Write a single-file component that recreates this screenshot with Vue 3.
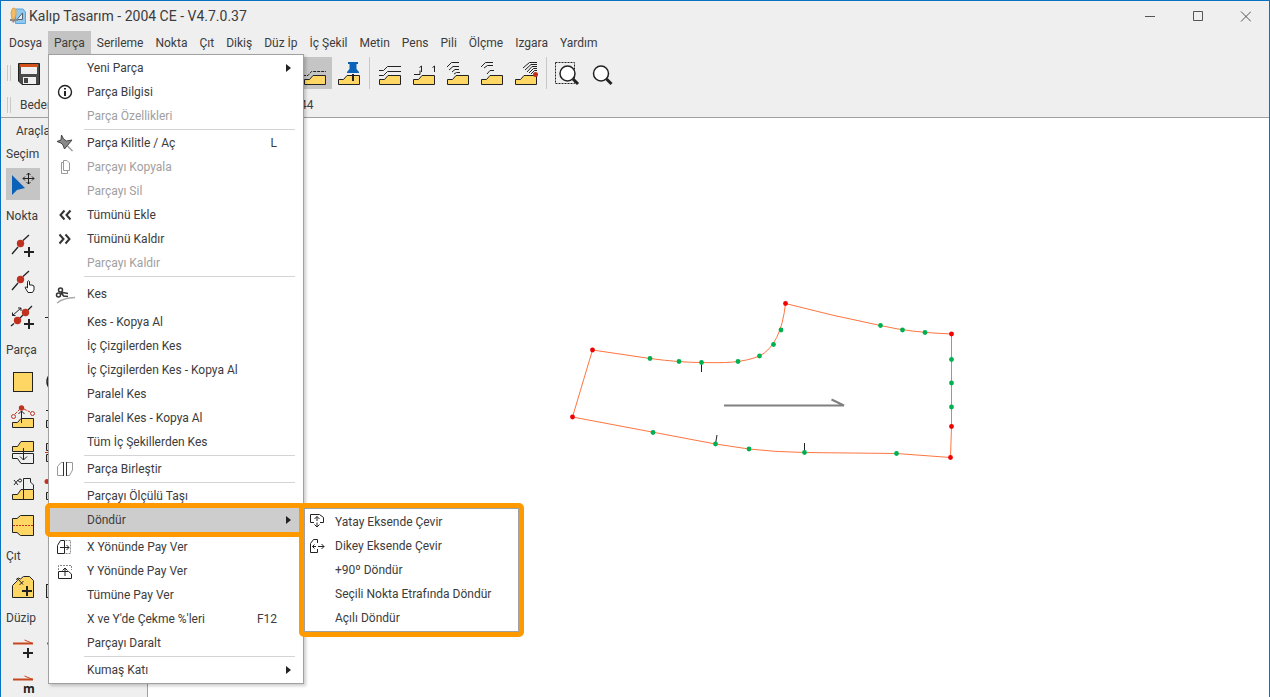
<script setup>
const menus = ['Dosya', 'Parça', 'Serileme', 'Nokta', 'Çıt', 'Dikiş', 'Düz İp', 'İç Şekil', 'Metin', 'Pens', 'Pili', 'Ölçme', 'Izgara', 'Yardım']

const block = '<path d="M6.5 27.5V22.5H11.5L15 18.5H27.5V27.5Z" fill="#fdd663" stroke="#222"/>'
const plus = (x, y) => `<path d="M${x - 5} ${y}H${x + 5}M${x} ${y - 5}V${y + 5}" stroke="#222" stroke-width="2"/>`

const icons = {
  save: '<path d="M6.5 6.5H27.5V27.5H10L6.5 24Z" fill="#4a4a4a" stroke="#222"/><path d="M8 7H26V10H8Z" fill="#d2521c"/><path d="M9 10H25V17H9Z" fill="#efefef"/><path d="M11 20H24V27H11Z" fill="#efefef"/><path d="M12 21H16V26H12Z" fill="#444"/>',
  grade: block + '<path d="M5 18.5H10L13.5 14.5H28" stroke="#222" stroke-dasharray="3 1"/>',
  pin: block + '<path d="M16 5H26V7H24.500V12L27 15V16H15V15L17.500 12V7H16Z" fill="#0a62b8"/><path d="M21 17V24" stroke="#222" stroke-width="2"/>',
  lines: block + '<path d="M6 13.500H10.500L14.500 9.500H28M6 18.500H10.500L14.500 14.500H28" stroke="#222"/>',
  ones: block + '<path d="M7 17.500H13V13.500M12.500 10.500L14.500 9V15M25.500 10.500L27.500 9V15" stroke="#222"/>',
  nestA: block + '<path d="M6 10L10.500 5.500H18M8 13L12 9.500H18M11 15L14 12.500H18M13 17L15.500 15.500H19" stroke="#222"/>',
  nestB: block + '<path d="M6 10L10.500 5.500H18M9 11L12.500 8.500H18M12 17L15 13.500H19" stroke="#222"/>',
  nestC: block + '<path d="M14 11L20.500 5.500H28M16 13L22 7.500H28M18 15L23 9.500H28M20 16L24.500 11.500H28M22 17L25.500 13.500H28" stroke="#222"/><circle cx="26.500" cy="17.500" r="2.500" fill="#c22f1c"/>',
  zoomArea: '<rect x="5.500" y="5.500" width="19" height="21" stroke="#222" stroke-dasharray="2 1"/><circle cx="17.500" cy="16.500" r="7.500" fill="#fff" stroke="#222" stroke-width="1.500"/><path d="M23 22L28 27" stroke="#222" stroke-width="3"/>',
  zoom: '<circle cx="17" cy="16.500" r="7.500" fill="#fff" stroke="#222" stroke-width="1.500"/><path d="M22.500 22L27.500 27" stroke="#222" stroke-width="3"/>',
  select: '<path d="M6 7V27L11 22L19 20Z" fill="#0a62b8"/><path d="M17 10.500H28M22.500 5V16M19 8.500L17 10.500L19 12.500M26 8.500L28 10.500L26 12.500M20.500 7L22.500 5L24.500 7M20.500 14L22.500 16L24.500 14" stroke="#222"/>',
  pointAdd: '<path d="M6 24L12 17M17 10.500L23 5" stroke="#222" stroke-width="1.300"/><circle cx="14.500" cy="13.500" r="3.700" fill="#c03220"/>' + plus(23, 22),
  pointMove: '<path d="M6 24L12 17M17 10.500L23 5" stroke="#222" stroke-width="1.300"/><circle cx="14.500" cy="13.500" r="3.700" fill="#c03220"/><path d="M21.500 22V15.500Q22.500 14 23.500 15.500V19H26L28 20V24L26.500 26.500H22L19 21.500Q20 20 21.500 22Z" fill="#fff" stroke="#222"/>',
  pointPair: '<path d="M5 24L8 21.500M14 16L17 13M22 8L26 4" stroke="#222" stroke-width="1.300"/><path d="M6.500 13.500L15 6M6.500 10.500V13.500H9.500M12 6H15V9" stroke="#222"/><circle cx="19.500" cy="10.500" r="3.700" fill="#c03220"/><circle cx="11.500" cy="18.500" r="3.700" fill="#c03220"/>' + plus(23, 22),
  dash: '<path d="M5 15.500H20" stroke="#222"/>',
  square: '<rect x="7.500" y="8.500" width="19" height="19" fill="#fdd663" stroke="#222"/>',
  circle: '<circle cx="17" cy="17.500" r="10" fill="#fdd663" stroke="#222" stroke-width="1.500"/>',
  pull: block + '<path d="M9 14L13 10M18 9L24 12" stroke="#c03220" stroke-dasharray="3 1"/><circle cx="15.500" cy="8" r="2.700" fill="#c03220"/><circle cx="7.500" cy="16.500" r="2" stroke="#c03220"/><circle cx="26.500" cy="13.500" r="2" stroke="#c03220"/><path d="M15.500 23V11M12.500 14L15.500 11L18.500 14" stroke="#222"/>',
  pullB: '<path d="M6.500 27.500V20.500H27.500V27.500Z" fill="#fdd663" stroke="#222"/><path d="M6 10.500H20" stroke="#222"/>',
  mirror: '<path d="M6.500 15.500V10.500H11.500L15 5.500H27.500V15.500Z" fill="#fdd663" stroke="#222"/><path d="M6.500 17.500V22.500H11.500L15 27.500H27.500V17.500Z" stroke="#222"/><path d="M17.500 12V24M14 20.500L17.500 24L21 20.500" stroke="#222"/>',
  mirrorB: '<path d="M6.500 14.500V7.500H27.500V14.500ZM6.500 18.500V25.500H27.500V18.500Z" fill="#fdd663" stroke="#222"/><path d="M5 16.500H28" stroke="#c03220"/>',
  measure: '<path d="M6.500 27.500V22.500H11.500L15 17.500H27.500V27.500Z" fill="#fdd663" stroke="#222"/><path d="M17.500 27V6.500H24.500V10L27.500 13V17" stroke="#222"/><path d="M8 8L12 13M12 8L8 13" stroke="#222"/><circle cx="14" cy="8.500" r="1.500" stroke="#222"/>',
  measureB: '<path d="M6.500 27.500V20.500H27.500V27.500Z" fill="#fdd663" stroke="#222"/><circle cx="7" cy="9.500" r="2.500" fill="#c03220"/>',
  fold: '<path d="M6.500 10.500H11L14.500 7.500H27.500V27.500H14.500L11 24.500H6.500Z" fill="#fdd663" stroke="#222"/><path d="M7 17.500H27" stroke="#c03220" stroke-dasharray="2 1"/>',
  notch: '<path d="M6.500 27.500V15.500L11.500 10.500L10.500 9L12.500 8L14.500 9L17.500 6.500H23.500L27.500 10.500V27.500Z" fill="#fdd663" stroke="#222"/><path d="M12 9L17 14.500M13.500 15L17.500 11" stroke="#222"/>' + plus(21, 21),
  notchB: '<rect x="6.500" y="14.500" width="21" height="13" fill="#fdd663" stroke="#222"/>',
  grainAdd: '<path d="M7 11.500H27" stroke="#c8461e" stroke-width="2"/><path d="M27 11.500L18.500 8" stroke="#c8461e"/>' + plus(22, 21),
  grainM: '<path d="M7 11.500H27" stroke="#c8461e" stroke-width="2"/><path d="M27 11.500L18.500 8" stroke="#c8461e"/><text x="17" y="25" font-size="12" font-weight="bold" font-family="Open Sans" fill="#222">m</text>',
  grainB: '<path d="M7 11.500H27" stroke="#c8461e" stroke-width="2"/>',
  info: '<circle cx="12" cy="12" r="6.500" stroke="#222" stroke-width="1.400"/><path d="M12 8V9.500M12 11V16" stroke="#222" stroke-width="2"/>',
  tack: '<path d="M8.500 4L10.500 8L13.500 10L19 9L11.500 18L10 14L8 12L4 10.500L8 9Z" fill="#888" stroke="#444"/><path d="M14.500 15L19.500 20" stroke="#999" stroke-width="1.400"/>',
  copy: '<path d="M10.500 5.500H14L16.500 8V15.500H10.500ZM10 7.500H8.500V18.500H14.500V16" stroke="#999"/>',
  prev: '<path d="M11.500 7.500L7.500 12L11.500 16.500M17.500 7.500L13.500 12L17.500 16.500" stroke="#333" stroke-width="2"/>',
  next: '<path d="M6.500 7.500L10.500 12L6.500 16.500M12.500 7.500L16.500 12L12.500 16.500" stroke="#333" stroke-width="2"/>',
  cut: '<circle cx="7.500" cy="8" r="2" stroke="#333" stroke-width="1.500"/><circle cx="5.500" cy="13" r="2" stroke="#333" stroke-width="1.500"/><path d="M8 10L10.500 14L15 14.500M7.500 12.500L10 10.500L15 11.500" stroke="#333" stroke-width="1.500"/><path d="M4 21Q10 16 22 15.500" stroke="#aaa" stroke-width="1.300"/>',
  join: '<path d="M10 5.500H8L4.500 9.500V18.500H10M14 5.500H19.500V13L16.500 18.500H14" stroke="#999"/><path d="M10.500 5V19M13.500 5V19" stroke="#333"/>',
  growX: '<path d="M12.500 5.500H17.500V18.500H12.500" stroke="#888" stroke-dasharray="2 1"/><path d="M11.500 18.500H4.500V10.500L7.500 5.500H11.500ZM7 12.500H16M13.500 10L16 12.500L13.500 15" stroke="#222"/>',
  growY: '<path d="M5.500 11V6.500H18.500V11" stroke="#888" stroke-dasharray="2 1"/><path d="M5.500 12.500V19.500H18.500V15L15.500 12.500H5.500M12 17V9M9.500 11.500L12 9L14.500 11.500" stroke="#222"/>',
  flipH: '<path d="M8 12.500H4.500V4.500H13.500L17.500 7.500V12.500H14" stroke="#222"/><path d="M11 11V6.500M8.500 9L11 6.500L13.500 9M11 12.500V17M8.500 14.500L11 17L13.500 14.500" stroke="#222"/>',
  flipV: '<path d="M11.500 9V5.500H7.500L4.500 9.500V18.500H11.500V15" stroke="#222"/><path d="M10 12.500H6.500M8.500 10.500L6.500 12.500L8.500 14.500M12 12.500H18M15.500 10L18 12.500L15.500 15" stroke="#222"/>'
}

const toolGroups = [['grade', 'pin'], ['lines', 'ones', 'nestA', 'nestB', 'nestC'], ['zoomArea', 'zoom']]

const sections = [
  { name: 'Seçim', tools: ['select'] },
  { name: 'Nokta', tools: ['pointAdd', '', 'pointMove', '', 'pointPair', 'dash'] },
  { name: 'Parça', tools: ['square', 'circle', 'pull', 'pullB', 'mirror', 'mirrorB', 'measure', 'measureB', 'fold', ''] },
  { name: 'Çıt', tools: ['notch', 'notchB'] },
  { name: 'Düzip', tools: ['grainAdd', 'grainB', 'grainM', ''] }
]

const menuItems = [
  { t: 'Yeni Parça', sub: true }, { t: 'Parça Bilgisi', i: 'info' }, { t: 'Parça Özellikleri', off: true }, { sep: true },
  { t: 'Parça Kilitle / Aç', i: 'tack', key: 'L' }, { t: 'Parçayı Kopyala', i: 'copy', off: true }, { t: 'Parçayı Sil', off: true },
  { t: 'Tümünü Ekle', i: 'prev' }, { t: 'Tümünü Kaldır', i: 'next' }, { t: 'Parçayı Kaldır', off: true }, { sep: true },
  { t: 'Kes', i: 'cut', tall: true }, { t: 'Kes - Kopya Al' }, { t: 'İç Çizgilerden Kes' }, { t: 'İç Çizgilerden Kes - Kopya Al' },
  { t: 'Paralel Kes' }, { t: 'Paralel Kes - Kopya Al' }, { t: 'Tüm İç Şekillerden Kes' }, { sep: true },
  { t: 'Parça Birleştir', i: 'join' }, { sep: true },
  { t: 'Parçayı Ölçülü Taşı' }, { t: 'Döndür', sub: true, on: true }, { sep: true },
  { t: 'X Yönünde Pay Ver', i: 'growX' }, { t: 'Y Yönünde Pay Ver', i: 'growY' }, { t: 'Tümüne Pay Ver' },
  { t: "X ve Y'de Çekme %'leri", key: 'F12' }, { t: 'Parçayı Daralt' }, { sep: true }, { t: 'Kumaş Katı', sub: true }
]

const subItems = [
  { t: 'Yatay Eksende Çevir', i: 'flipH' }, { t: 'Dikey Eksende Çevir', i: 'flipV' }, { t: '+90º Döndür' },
  { t: 'Seçili Nokta Etrafında Döndür' }, { t: 'Açılı Döndür' }
]

const corners = [[32.5, 60], [225.5, 13.5], [391.500, 44], [391.500, 136.500], [390.500, 167.500], [12.500, 127]]
const points = [[90, 68.500], [119, 71.500], [141.500, 72.500], [178, 71.500], [199.500, 66], [213.500, 54.500], [221, 40], [320.500, 35.500], [342.500, 40], [365, 42.500], [391.500, 69.500], [391.500, 93], [391.500, 117], [93, 142.500], [155.500, 154], [189, 159], [244.500, 162.500], [336.500, 163.500]]
</script>

<template>
  <div class="window">
    <header class="titlebar">
      <svg class="logo" viewBox="0 0 18 18" fill="none">
        <path d="M6.500 2H14L16.500 5V16.500H6.500Z" fill="#8cc8f0" stroke="#5aa5dc" />
        <path d="M8 12.500L13.500 6V12.500Z" fill="#e6eef5" stroke="#56636f" />
        <path d="M1 12H9V14H6L4 16L3 14H1Z" fill="#888" />
        <path d="M3.500 1.500Q6 0 7 3V8L5 12H3L2 6Z" fill="#f3bd68" stroke="#dda04b" />
      </svg>
      <h1>Kalıp Tasarım - 2004 CE - V4.7.0.37</h1>
      <div class="controls">
        <button aria-label="Simge durumuna küçült"><svg viewBox="0 0 11 11"><path d="M1 5.500H11" /></svg></button>
        <button aria-label="Ekranı kapla"><svg viewBox="0 0 11 11"><path d="M1.500 .5H10.500V9.500H1.500Z" /></svg></button>
        <button aria-label="Kapat"><svg viewBox="0 0 11 11"><path d="M1 .5L11 10.500M11 .5L1 10.500" /></svg></button>
      </div>
    </header>

    <nav class="menubar">
      <button v-for="m in menus" :key="m" :class="{ open: m === 'Parça' }">{{ m }}</button>
    </nav>

    <div class="toolbar">
      <span class="grip"></span>
      <button class="tool save" aria-label="Kaydet"><svg viewBox="0 0 34 32" v-html="icons.save"></svg></button>
      <div v-for="(g, n) in toolGroups" :key="n" class="group">
        <button v-for="k in g" :key="k" class="tool" :class="{ on: k === 'grade' }" :aria-label="k"><svg viewBox="0 0 34 32" v-html="icons[k]"></svg></button>
      </div>
    </div>
    <div class="sizes">
      <span class="grip"></span>
      <span class="beden">Beden</span>
      <span class="size">44</span>
    </div>

    <div class="body">
      <aside class="sidebar">
        <h2>Araçlar</h2>
        <section v-for="s in sections" :key="s.name">
          <h3>{{ s.name }}</h3>
          <div class="grid">
            <template v-for="(k, n) in s.tools" :key="n">
              <button v-if="k" class="tool" :class="{ on: k === 'select' }" :aria-label="k"><svg viewBox="0 0 34 32" v-html="icons[k]"></svg></button>
              <span v-else></span>
            </template>
          </div>
        </section>
      </aside>
      <main class="canvas">
        <svg class="pattern" viewBox="0 0 410 180" fill="none">
          <path d="M32.500 60L90 68.500Q120 72.500 141.500 72.500C165 73 182 73 199.500 66Q221 55 225.500 13.500Q273 26 320.500 35.500Q350 42.500 391.500 44V136.500L390.500 167.500L336.500 163.500L244.500 162.500Q215 162 189 159L155.500 154L12.500 127Z" stroke="#ff7540" />
          <path d="M141.500 73V82M155.500 154L157 145M244.500 162V153" stroke="#222" />
          <path d="M164 115.500H284L271.500 109.500" stroke="#808080" stroke-width="2" />
          <circle v-for="(p, n) in points" :key="'g' + n" :cx="p[0]" :cy="p[1]" r="2.400" fill="#00b050" />
          <circle v-for="(p, n) in corners" :key="'r' + n" :cx="p[0]" :cy="p[1]" r="2.400" fill="#f00000" />
        </svg>
      </main>
    </div>

    <div class="popup main-menu" role="menu">
      <template v-for="(m, n) in menuItems" :key="n">
        <hr v-if="m.sep">
        <button v-else role="menuitem" :disabled="m.off" :class="{ tall: m.tall, on: m.on }">
          <svg viewBox="0 0 24 24" fill="none" v-html="m.i ? icons[m.i] : ''"></svg>
          <span class="label">{{ m.t }}</span>
          <kbd v-if="m.key">{{ m.key }}</kbd>
          <i v-if="m.sub" class="arrow"></i>
        </button>
      </template>
    </div>
    <div class="mark"></div>
    <div class="submark">
      <div class="popup sub-menu" role="menu">
        <button v-for="m in subItems" :key="m.t" role="menuitem">
          <svg viewBox="0 0 24 24" fill="none" v-html="m.i ? icons[m.i] : ''"></svg>
          <span class="label">{{ m.t }}</span>
        </button>
      </div>
    </div>
  </div>
</template>

<style>
body { margin: 0; overflow: hidden; }
</style>

<style scoped>
* { box-sizing: border-box; }
.window {
  position: relative; display: flex; flex-direction: column; height: 100vh; overflow: hidden;
  background: #efefef; border: 1px solid #0a70c0; border-bottom: 0; color: #3c3c3c;
  font: 12px/16px Roboto, "Noto Sans", sans-serif;
}
button { border: 0; padding: 0; margin: 0; background: none; font: inherit; color: inherit; display: block; }
svg { display: block; fill: none; }
h1, h2, h3 { margin: 0; font-weight: normal; font-size: 12px; }
.titlebar { display: flex; align-items: center; height: 30px; flex: none; padding-left: 8px; }
.logo { width: 18px; height: 18px; }
h1 { font-size: 14px; padding-left: 2px; flex: 1; }
.controls { display: flex; }
.controls button { width: 48px; height: 30px; display: flex; align-items: center; justify-content: center; }
.controls svg { width: 11px; height: 11px; stroke: #555; }
.menubar { display: flex; height: 23px; flex: none; padding-left: 2px; }
.menubar button { padding: 0 6px; font-size: 12px; height: 23px; }
.menubar .open { background: #c3c3c3; }
.toolbar { display: flex; align-items: center; height: 38px; flex: none; }
.grip { width: 4px; height: 16px; margin: 0 1px 0 6px; border: solid #c8c8c8; border-width: 0 1px; flex: none; }
.tool { width: 34px; height: 32px; flex: none; }
.tool svg { width: 34px; height: 32px; }
.on { background: #c5c5c5; }
.save { margin-right: 252px; }
.group { display: flex; }
.group + .group { border-left: 1px solid #c8c8c8; margin-left: 3px; padding-left: 3px; }
.sizes { display: flex; align-items: center; height: 26px; flex: none; border-bottom: 1px solid #a0a0a0; }
.beden { width: 288px; padding-left: 8px; }
.body { display: flex; flex: 1; min-height: 0; }
.sidebar { width: 147px; flex: none; border-right: 1px solid #a0a0a0; padding-left: 5px; }
h2 { height: 24px; line-height: 26px; padding-left: 10px; }
h3 { line-height: 24px; margin-bottom: 2px; }
.grid { display: grid; grid-template-columns: 34px 34px; grid-auto-rows: 32px; row-gap: 4px; padding-bottom: 4px; }
.canvas { flex: 1; background: #fff; position: relative; }
.pattern { position: absolute; left: 412px; top: 172px; width: 410px; height: 180px; }
.popup { background: #fff; border: 1px solid #a0a0a0; padding: 1px; }
.main-menu { position: absolute; left: 47px; top: 53px; width: 256px; box-shadow: 2px 2px 3px #0003; }
.popup button { display: flex; align-items: center; width: 100%; height: 24px; text-align: left; padding-left: 3px; font-size: 12px; }
.popup .tall { height: 32px; }
.popup button:disabled { color: #a0a0a0; }
.popup .on { background: #cdcdcd; }
.popup svg { width: 24px; height: 24px; margin-right: 10px; flex: none; }
.popup .label { flex: 1; white-space: nowrap; }
kbd { font: inherit; text-align: right; margin-right: 25px; }
.arrow { border: 4px solid transparent; border-left: 5px solid #222; border-right: 0; margin-right: 11px; }
hr { border: 0; height: 1px; margin: 1px 7px 1px 34px; background: #d4d4d4; }
.mark { position: absolute; left: 44px; top: 502px; width: 260px; height: 34px; border: 5px solid #ff9900; border-radius: 5px; }
.submark { position: absolute; left: 298px; top: 502px; width: 225px; border: 5px solid #ff9900; border-radius: 5px; }
.sub-menu button { padding-left: 0; }
.sub-menu svg { margin-right: 5px; }
</style>
